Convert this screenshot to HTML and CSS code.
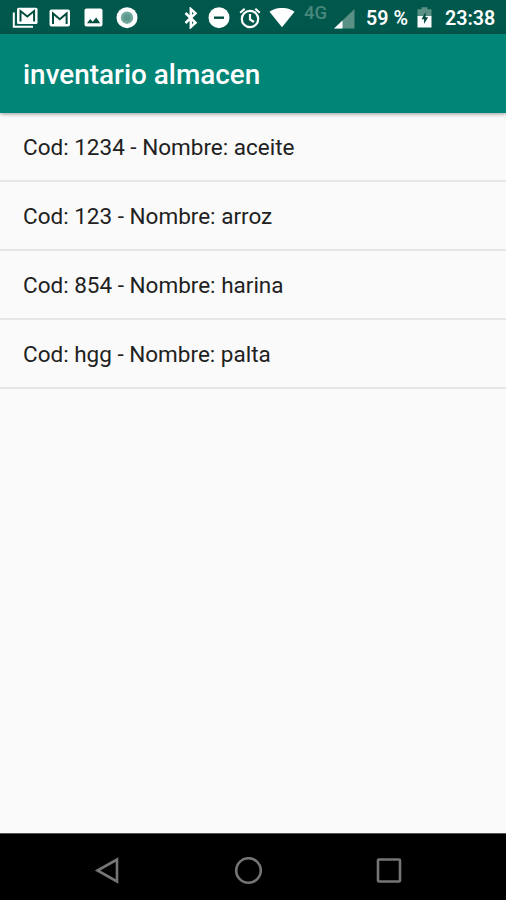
FILE: index.html
```
<!DOCTYPE html>
<html lang="es">
<head>
    <meta charset="UTF-8">
    <meta name="viewport" content="width=device-width, initial-scale=1.0">
    <title>inventario almacen</title>
    <link rel="stylesheet" href="styles.css">
</head>
<body>
    <header class="status-bar">
        <div class="notifications">
            <svg class="icon" width="26" height="22" viewBox="0 0 26 22">
                <path d="M1.8 5.5v14.3H21" fill="none" stroke="#fff" stroke-width="2"/>
                <rect x="5" y="0.7" width="20.5" height="16.3" rx="1.5" fill="#fff"/>
                <path d="M8.5 14.5V4l6.8 5.5L22.1 4v10.5" fill="none" stroke="#004d40" stroke-width="2"/>
            </svg>
            <svg class="icon" width="22" height="18" viewBox="0 0 22 18">
                <rect x="0.5" y="0.5" width="20.5" height="17" rx="2" fill="#fff"/>
                <path d="M4 15V4.5l6.8 5.7 6.8-5.7V15" fill="none" stroke="#004d40" stroke-width="2"/>
            </svg>
            <svg class="icon" width="19" height="19" viewBox="0 0 19 19">
                <rect x="0.5" y="0.5" width="18" height="18" rx="2" fill="#fff"/>
                <path d="M3 15.3l3.2-4.2 2.5 2.6 3.5-4.2 4 5.8z" fill="#004d40"/>
            </svg>
            <svg class="icon" width="22" height="22" viewBox="0 0 22 22">
                <circle cx="11" cy="10.7" r="10.5" fill="#fff"/>
                <circle cx="11" cy="10.7" r="6.2" fill="#71a89d"/>
                <circle cx="11" cy="10.7" r="3.5" fill="#5c988c"/>
            </svg>
        </div>
        <div class="system">
            <svg class="icon bluetooth" width="14" height="22" viewBox="0 0 14 22">
                <path d="M1.5 6l10 9.8-4.7 4.2V2l4.7 4.2L1.5 16" fill="none" stroke="#fff" stroke-width="2.5"/>
            </svg>
            <svg class="icon" width="22" height="22" viewBox="0 0 22 22">
                <circle cx="11" cy="10.7" r="10.5" fill="#fff"/>
                <path d="M6 10.7h10" stroke="#004d40" stroke-width="2.4"/>
            </svg>
            <svg class="icon alarm" width="22" height="22" viewBox="0 0 22 22">
                <g fill="none" stroke="#fff" stroke-width="2.2">
                    <circle cx="11" cy="12" r="8.2"/>
                    <path d="M11 7v5.3l4 2.7M1.2 5.7l4.5-4M20.8 5.7l-4.5-4"/>
                </g>
            </svg>
            <svg class="icon wifi" width="26" height="20" viewBox="0 0 26 20">
                <path d="M13 19.2L.5 3.7C8-1.3 18-1.3 25.5 3.7z" fill="#fff"/>
            </svg>
            <span class="network">4G</span>
            <svg class="icon signal" width="21" height="20" viewBox="0 0 21 20">
                <path d="M0 19.5L20.5 0v19.5z" fill="#5b9185"/>
                <path d="M0 19.5l8.5-8.1v8.1z" fill="#fff"/>
            </svg>
            <span class="percent">59 %</span>
            <svg class="icon battery" width="15" height="21" viewBox="0 0 15 21">
                <path d="M.5 2.3h4V.2h6v2.1h4V9H.5z" fill="#5b9185"/>
                <path d="M.5 9h14v11.5H.5z" fill="#fff"/>
                <path d="M8.6 5L4.5 12.2h2.6V17l4-6.8H8.6z" fill="#004d40"/>
            </svg>
            <span class="clock">23:38</span>
        </div>
    </header>

    <div class="app-bar">
        <h1>inventario almacen</h1>
    </div>

    <main>
        <ul class="product-list">
            <li>Cod: 1234 - Nombre: aceite</li>
            <li>Cod: 123 - Nombre: arroz</li>
            <li>Cod: 854 - Nombre: harina</li>
            <li>Cod: hgg - Nombre: palta</li>
        </ul>
    </main>

    <nav class="nav-bar">
        <svg width="28" height="28" viewBox="0 0 28 28">
            <path d="M4.5 13.5L24 2.5v22z"/>
        </svg>
        <svg width="28" height="28" viewBox="0 0 28 28">
            <circle cx="14.5" cy="13.5" r="12.3"/>
        </svg>
        <svg width="28" height="28" viewBox="0 0 28 28">
            <rect x="3" y="2.5" width="22" height="22" rx="1"/>
        </svg>
    </nav>
</body>
</html>
```
FILE: styles.css
```
* {
    margin: 0;
    padding: 0;
    box-sizing: border-box;
    font-family: Roboto, sans-serif;
}

body {
    display: flex;
    flex-direction: column;
    height: 100vh;
    overflow: hidden;
    background-color: #fafafa;
}

svg {
    display: block;
    flex: none;
}

.status-bar {
    display: flex;
    justify-content: space-between;
    height: 34px;
    padding: 0 11px 0 12px;
    background-color: #00574b;
    color: #fff;
    font-size: 19.7px;
    font-weight: 600;
    line-height: 37px;
    white-space: nowrap;
}

.notifications,
.system {
    display: flex;
    align-items: center;
    height: 35px;
}

.notifications {
    gap: 12px;
}

.notifications .icon:nth-child(2) {
    margin: 0 1px 0 -1px;
}

.notifications .icon:last-child {
    margin-left: 1px;
}

.system .icon {
    margin-right: 9px;
}

.system .bluetooth {
    margin-right: 10px;
}

.system .alarm {
    margin-right: 8px;
}

.system .wifi {
    margin-right: 9px;
}

.network {
    width: 30px;
    height: 35px;
    color: #47877b;
    font-size: 18.5px;
    font-weight: 500;
    line-height: 27px;
}

.system .signal {
    margin: 2px 11px 0 0;
}

.percent,
.clock {
    padding-top: 2px;
}

.percent {
    width: 51px;
}

.system .battery {
    margin-right: 13px;
}

.clock {
    width: 50px;
}

.app-bar {
    height: 79px;
    padding-left: 23px;
    background-color: #008577;
    box-shadow: 0 1px 4px rgba(0, 0, 0, 0.4);
}

.app-bar h1 {
    color: #fff;
    font-size: 27.9px;
    font-weight: 500;
    line-height: 82px;
}

main {
    flex: 1;
}

.product-list {
    list-style: none;
}

.product-list li {
    height: 69px;
    padding-left: 23px;
    border-bottom: 2px solid #e6e6e6;
    color: #212121;
    font-size: 22.5px;
    line-height: 69px;
}

.nav-bar {
    display: flex;
    justify-content: space-between;
    align-items: center;
    height: 67px;
    padding: 7px 103px 0 93px;
    background-color: #000;
    border-top: 1px solid #555;
}

.nav-bar svg {
    fill: none;
    stroke: #757575;
    stroke-width: 2.6;
}
```
